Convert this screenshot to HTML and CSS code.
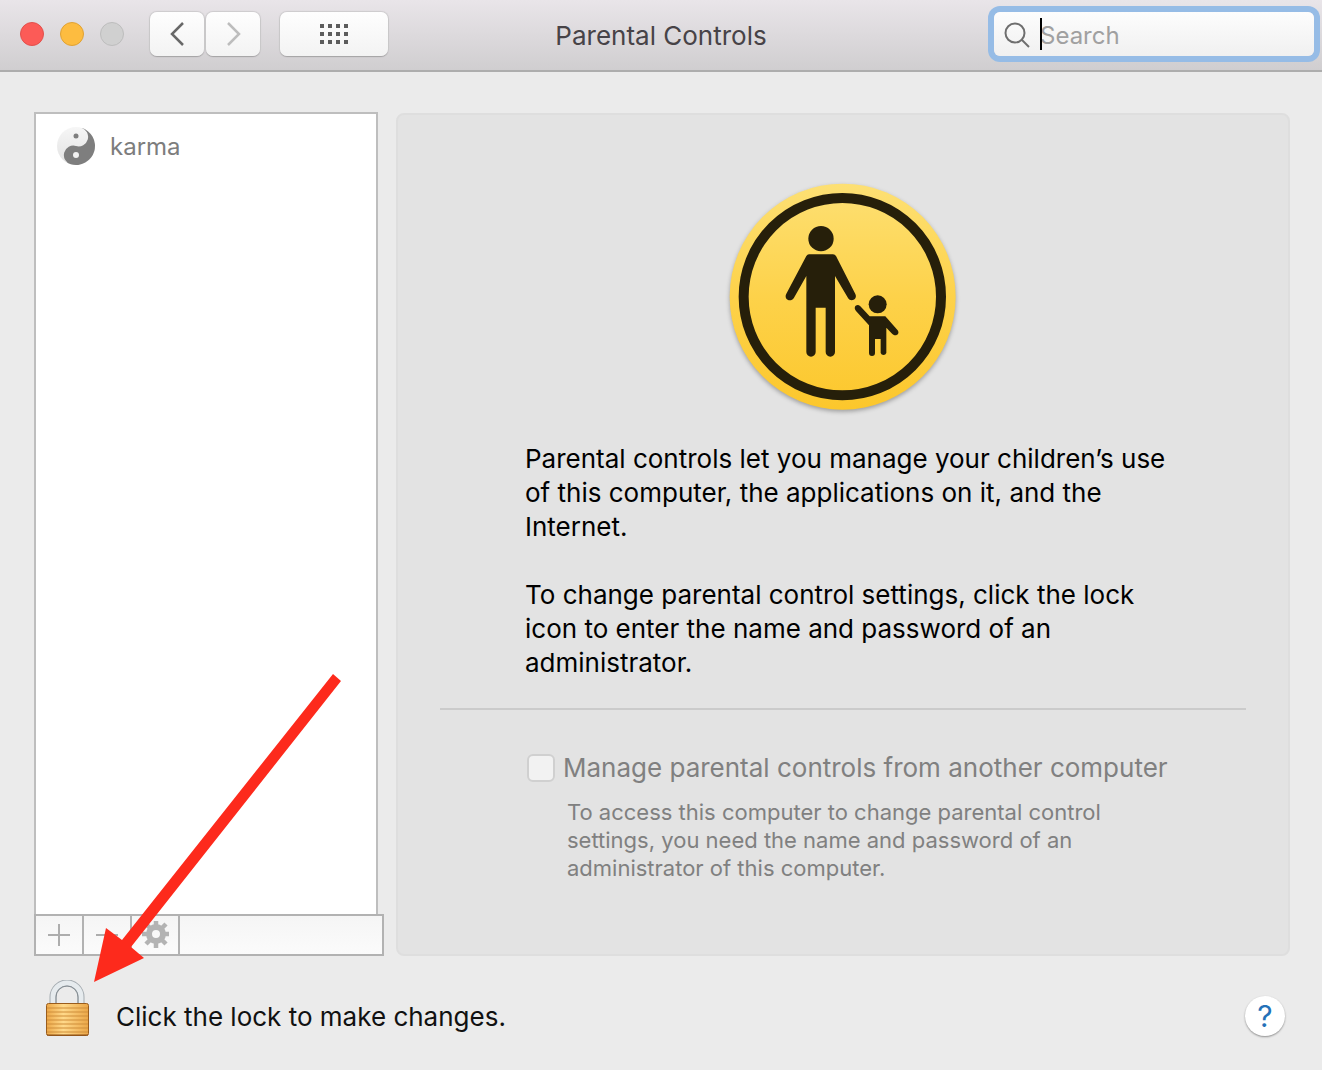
FILE: index.html
```html
<!DOCTYPE html>
<html lang="en">
<head>
    <meta charset="UTF-8">
    <meta name="viewport" content="width=device-width, initial-scale=1.0">
    <title>Parental Controls</title>
    <link rel="stylesheet" href="styles.css">
</head>
<body>
    <header class="toolbar">
        <div class="toolbar-left">
            <div class="lights">
                <button class="light close" aria-label="Close"></button>
                <button class="light minimize" aria-label="Minimize"></button>
                <button class="light zoom" aria-label="Zoom" disabled></button>
            </div>
            <div class="nav">
                <button class="tool" aria-label="Back">
                    <svg width="20" height="28" viewBox="0 0 20 28"><path d="M16 3 5 14l11 11" fill="none" stroke="#686868" stroke-width="2.500"/></svg>
                </button>
                <button class="tool" aria-label="Forward" disabled>
                    <svg width="20" height="28" viewBox="0 0 20 28"><path d="M5 3l11 11L5 25" fill="none" stroke="#bdbdbd" stroke-width="2.500"/></svg>
                </button>
            </div>
            <button class="tool show-all" aria-label="Show All">
                <svg width="28" height="20" viewBox="0 0 28 20">
                    <path d="M0 2h28M0 10h28M0 18h28" stroke="#5c5c5c" stroke-width="4" stroke-dasharray="4 4"/>
                </svg>
            </button>
        </div>
        <h1>Parental Controls</h1>
        <label class="search">
            <svg width="26" height="26" viewBox="0 0 26 26" fill="none" stroke="#6e6e6e" stroke-width="2">
                <circle cx="11" cy="11" r="9.500"/>
                <path d="M17.500 17.500 25 25"/>
            </svg>
            <input type="text" placeholder="Search" aria-label="Search">
            <span class="caret"></span>
        </label>
    </header>

    <main>
        <section class="sidebar">
            <ul class="users">
                <li>
                    <svg width="40" height="40" viewBox="0 0 40 40">
                        <defs>
                            <linearGradient id="light" x1="0" y1="0" x2="0" y2="1">
                                <stop offset="0" stop-color="#f6f6f6"/>
                                <stop offset="1" stop-color="#e2e2e2"/>
                            </linearGradient>
                        </defs>
                        <circle cx="20" cy="20" r="19" fill="url(#light)"/>
                        <path d="M20 1a9.500 9.500 0 0 1 0 19a9.500 9.500 0 0 0 0 19a19 19 0 0 0 0-38z" fill="#7e7e7e" transform="rotate(16 20 20)"/>
                        <circle cx="20" cy="10" r="2.500" fill="#7e7e7e"/>
                        <circle cx="20" cy="29" r="3" fill="#f2f2f2"/>
                    </svg>
                    <span>karma</span>
                </li>
            </ul>
            <div class="list-actions">
                <button aria-label="Add" disabled>
                    <svg width="24" height="24" viewBox="0 0 24 24"><path d="M1 12h22M12 1v22" stroke="#adadad" stroke-width="2"/></svg>
                </button>
                <button aria-label="Remove" disabled>
                    <svg width="24" height="24" viewBox="0 0 24 24"><path d="M1 12h22" stroke="#adadad" stroke-width="2"/></svg>
                </button>
                <button aria-label="Actions" disabled>
                    <svg width="28" height="28" viewBox="-15 -13 28 28">
                        <circle r="7" fill="none" stroke="#b3b3b3" stroke-width="6"/>
                        <path d="M0-8v-6M0 8v6M-8 0h-6M8 0h6M-6-6l-4-4M6-6l4-4M-6 6l-4 4M6 6l4 4" stroke="#b3b3b3" stroke-width="4.500"/>
                    </svg>
                </button>
            </div>
            <svg class="arrow" width="260" height="315" viewBox="90 670 260 315">
                <path d="M94 982 106 928l16 12L333 674l8 7L131 947l13 11z" fill="#fd2a1c"/>
            </svg>
        </section>

        <section class="panel">
            <svg class="emblem" width="240" height="240" viewBox="40 20 720 720">
                <defs>
                    <linearGradient id="gold" x1="0" y1="0" x2="0" y2="1">
                        <stop offset="0" stop-color="#fde074"/>
                        <stop offset="0.500" stop-color="#fdd24a"/>
                        <stop offset="1" stop-color="#fcc72c"/>
                    </linearGradient>
                </defs>
                <circle cx="399" cy="379" r="339" fill="url(#gold)"/>
                <circle cx="398" cy="379" r="296" fill="none" stroke="#261f0a" stroke-width="30"/>
                <g fill="#261f0a">
                    <circle cx="334" cy="205" r="38"/>
                    <path d="M298 252h72q6 0 9 5l58 114c8 16-14 26-22 12l-39-66v228a14 14 0 0 1-28 0V412h-30v133a14 14 0 0 1-28 0V317l-37 65c-10 16-32 5-23-12l60-113q3-5 8-5z"/>
                    <circle cx="504" cy="402" r="27"/>
                    <path d="M452 408l28 30h47l37 42c8 11-6 21-16 11l-18-19v76a9 9 0 0 1-17 0v-42h-17v42a9 9 0 0 1-18 0v-83l-39-43c-10-12 3-24 13-14z"/>
                </g>
            </svg>
            <div class="intro">
                <p>Parental controls let you manage your children’s use of this computer, the applications on it, and the Internet.</p>
                <p>To change parental control settings, click the lock icon to enter the name and password of an administrator.</p>
            </div>
            <hr>
            <div class="remote">
                <input type="checkbox" id="remote" disabled>
                <label for="remote">Manage parental controls from another computer</label>
                <p>To access this computer to change parental control settings, you need the name and password of an administrator of this computer.</p>
            </div>
        </section>
    </main>

    <footer>
        <button class="lock">
            <svg width="46" height="58" viewBox="0 0 46 58">
                <defs>
                    <linearGradient id="brass" x1="0" y1="0" x2="1" y2="0">
                        <stop offset="0" stop-color="#eda848"/>
                        <stop offset="0.400" stop-color="#ffd98a"/>
                        <stop offset="1" stop-color="#eba647"/>
                    </linearGradient>
                </defs>
                <path d="M9 26V17a14 14 0 0 1 28 0v9" fill="none" stroke="#a4abb0" stroke-width="7"/>
                <path d="M9 26V17a14 14 0 0 1 28 0v9" fill="none" stroke="#e6ebee" stroke-width="5"/>
                <path d="M12 24V17a11 11 0 0 1 22 0v7" fill="none" stroke="#868e94" stroke-width="1"/>
                <rect x="2.500" y="23.500" width="42" height="32" rx="2" fill="url(#brass)" stroke="#9a5c1c"/>
                <path d="M3 28h41M3 32h41M3 36h41M3 40h41M3 44h41M3 48h41M3 52h41" stroke="#cf8e3a"/>
                <path d="M3 55h41" stroke="#8a4f18"/>
            </svg>
            <span>Click the lock to make changes.</span>
        </button>
        <button class="help" aria-label="Help">?</button>
    </footer>
</body>
</html>
```
FILE: styles.css
```css
* {
    box-sizing: border-box;
}

body {
    margin: 0;
    min-height: 100vh;
    display: flex;
    flex-direction: column;
    background: #ebebeb;
    font-family: Inter, "Liberation Sans", sans-serif;
    font-size: 26px;
    color: #111;
}

button {
    padding: 0;
    border: none;
    background: none;
    font: inherit;
    color: inherit;
}

svg {
    display: block;
}

.toolbar {
    display: grid;
    grid-template-columns: 1fr auto 1fr;
    align-items: center;
    height: 72px;
    padding: 0 8px 2px;
    border-bottom: 2px solid #adadad;
    background: linear-gradient(#e9e5e9, #d0ced0);
}

.toolbar-left {
    display: flex;
    align-items: center;
}

.lights {
    display: flex;
    gap: 16px;
    margin: 0 26px 0 12px;
}

.light {
    width: 24px;
    height: 24px;
    border-radius: 50%;
    border: 1px solid #bdbdbd;
    background: #d0d0d0;
}

.close {
    background: #fc5b57;
    border-color: #e2504c;
}

.minimize {
    background: #fdbc40;
    border-color: #e0a234;
}

.nav {
    display: flex;
    gap: 2px;
    margin-right: 20px;
}

.tool {
    display: flex;
    align-items: center;
    justify-content: center;
    width: 54px;
    height: 44px;
    border-radius: 7px;
    background: linear-gradient(#fefefe, #f3f3f3);
    box-shadow: 0 1px 1px #a5a3a5, 0 0 1px 1px #cdcbcd;
}

.show-all {
    width: 108px;
}

h1 {
    margin: 4px 0 0;
    font-size: 26px;
    font-weight: 400;
    line-height: 32px;
    color: #474347;
}

.search {
    position: relative;
    justify-self: end;
    display: flex;
    align-items: center;
    gap: 10px;
    width: 320px;
    height: 44px;
    padding: 2px 0 0 10px;
    border-radius: 6px;
    background: linear-gradient(#fdfdfd, #f0f0f0);
    box-shadow: 0 0 0 6px #96bce6;
}

.search input {
    flex: 1;
    min-width: 0;
    padding: 0;
    border: none;
    outline: none;
    background: none;
    font: inherit;
    font-size: 24px;
}

.search input::placeholder {
    color: #a0a0a0;
}

.caret {
    position: absolute;
    left: 46px;
    top: 6px;
    width: 2px;
    height: 32px;
    background: #000;
}

main {
    flex: 1;
    display: grid;
    grid-template-columns: 350px 1fr;
    gap: 12px;
    padding: 40px 32px 0 34px;
}

.sidebar {
    position: relative;
    display: flex;
    flex-direction: column;
}

.users {
    flex: 1;
    margin: 0 6px 0 0;
    padding: 12px 20px;
    list-style: none;
    border: 2px solid #bebebe;
    border-bottom: none;
    background: #fff;
}

.users li {
    display: flex;
    align-items: center;
    gap: 14px;
    font-size: 24px;
    color: #7d7d7d;
}

.list-actions {
    display: flex;
    height: 42px;
    border: 2px solid #b2b2b2;
    background: linear-gradient(#f5f5f5, #fbfbfb);
}

.list-actions button {
    display: flex;
    align-items: center;
    justify-content: center;
    width: 48px;
    border-right: 2px solid #b2b2b2;
}

.arrow {
    position: absolute;
    left: 56px;
    bottom: -29px;
}

.panel {
    display: flex;
    flex-direction: column;
    align-items: center;
    margin-top: 1px;
    padding: 62px 42px 0;
    border: 2px solid #dedede;
    border-radius: 8px;
    background: #e3e3e3;
}

.emblem {
    filter: drop-shadow(0 2px 2px rgba(0, 0, 0, 0.3));
}

.intro {
    width: 100%;
    max-width: 656px;
    margin-top: 25px;
    padding-left: 10px;
    line-height: 34px;
    color: #000;
}

.intro p {
    margin: 0 0 34px;
}

hr {
    width: 100%;
    height: 2px;
    margin: -6px 0 43px;
    border: none;
    background: #cbcbcb;
}

.remote {
    display: grid;
    grid-template-columns: 28px 1fr;
    column-gap: 8px;
    align-items: center;
    width: 100%;
    max-width: 632px;
    color: #808080;
}

.remote input {
    appearance: none;
    width: 28px;
    height: 28px;
    margin: 0;
    border: 2px solid #d0d0d0;
    border-radius: 6px;
    background: #f2f2f2;
}

.remote label {
    line-height: 30px;
    white-space: nowrap;
}

.remote p {
    grid-column: 2;
    max-width: 560px;
    margin: 15px 0 0 4px;
    font-size: 22px;
    line-height: 28px;
}

footer {
    display: flex;
    align-items: center;
    justify-content: space-between;
    height: 114px;
    padding: 6px 37px 0 44px;
}

.lock {
    display: flex;
    align-items: center;
    gap: 26px;
}

.lock svg {
    margin-bottom: 14px;
}

.help {
    width: 40px;
    height: 40px;
    border-radius: 50%;
    background: #fff;
    box-shadow: 0 1px 2px #8f8f8f;
    font-size: 30px;
    line-height: 40px;
    color: #2471b8;
}
```
